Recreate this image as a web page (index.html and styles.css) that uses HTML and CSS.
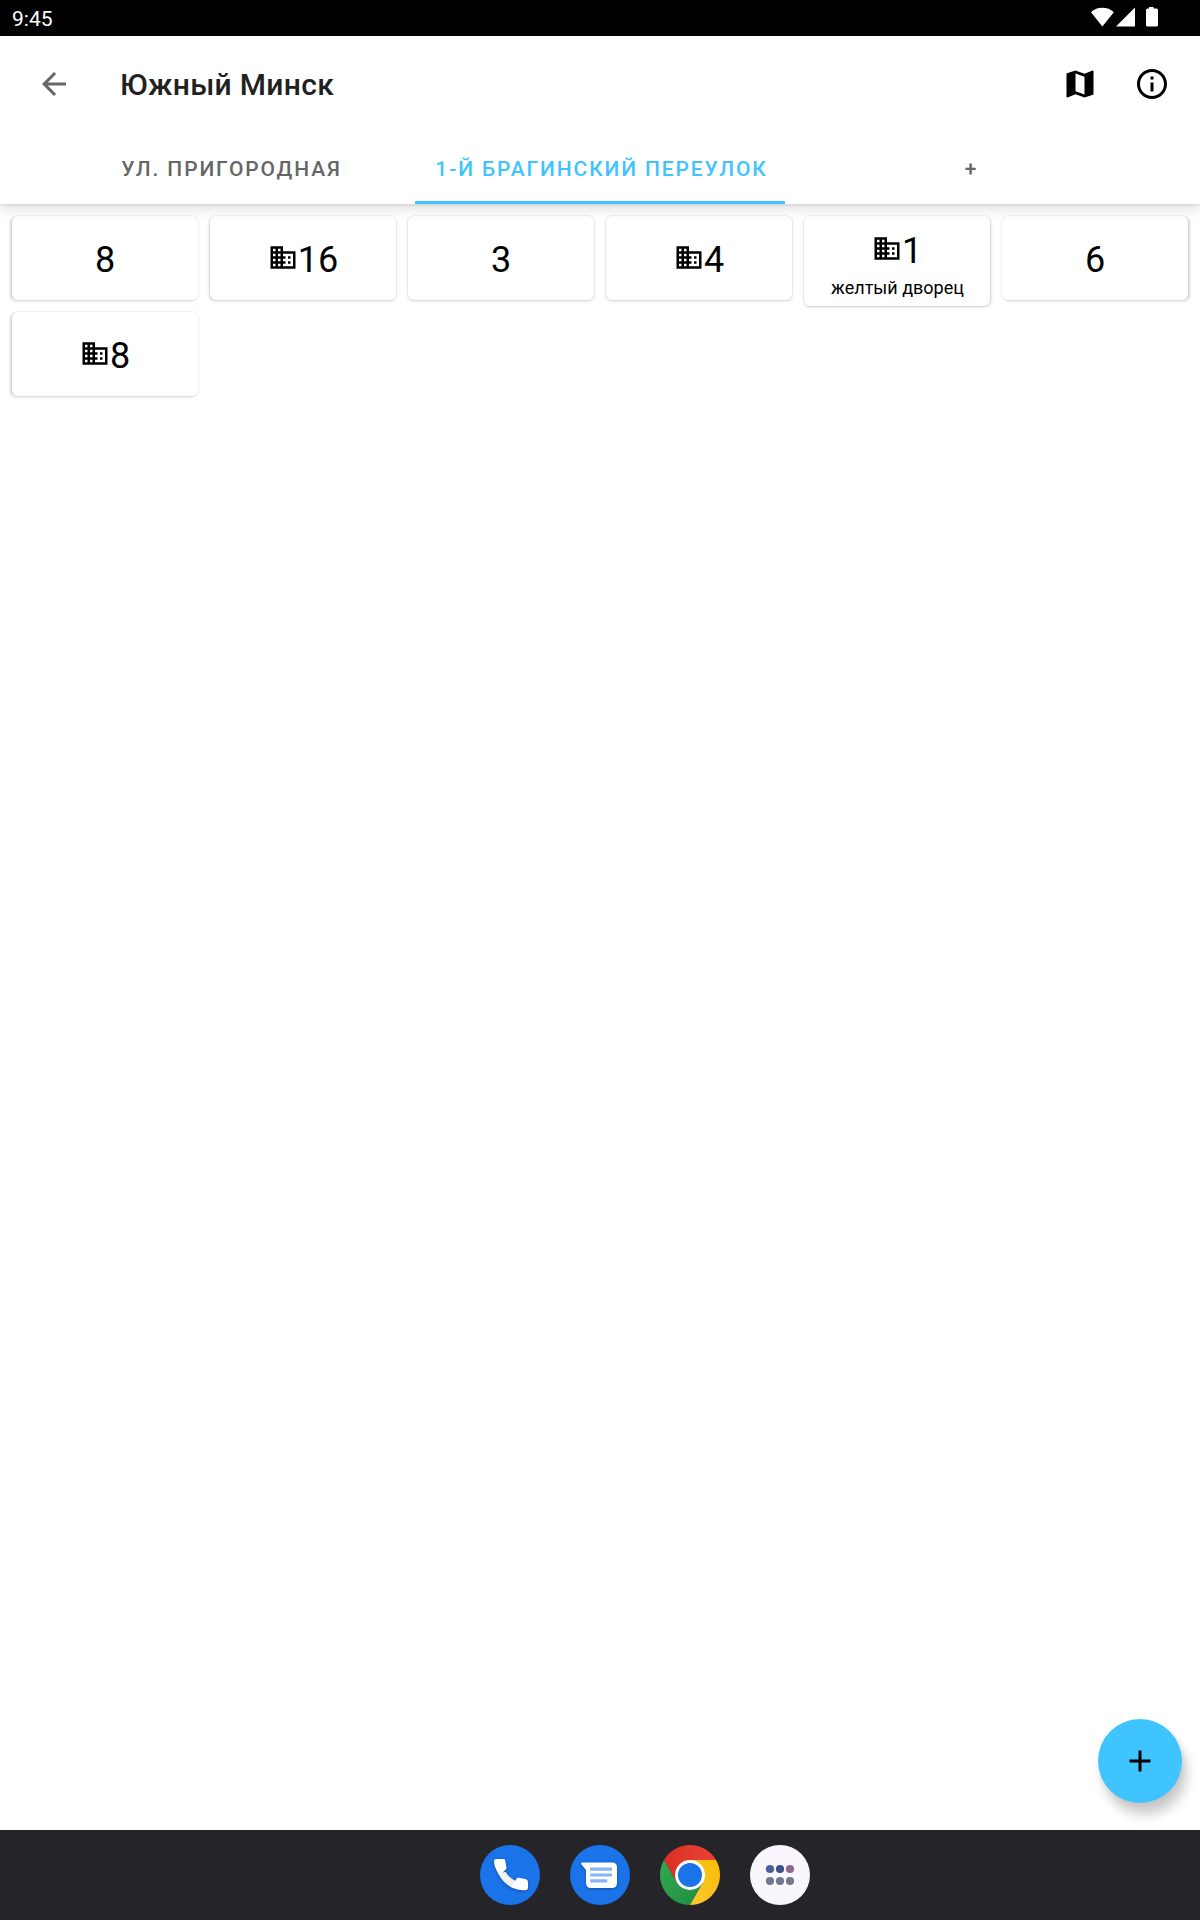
FILE: index.html
```
<!DOCTYPE html>
<html lang="ru">

<head>
    <meta charset="UTF-8">
    <title>Южный Минск</title>
    <link rel="stylesheet" href="styles.css">
</head>

<body>
    <svg class="sprite" aria-hidden="true">
        <symbol id="business" viewBox="0 0 24 24">
            <path d="M12 7V3H2v18h20V7H12zM6 19H4v-2h2v2zm0-4H4v-2h2v2zm0-4H4V9h2v2zm0-4H4V5h2v2zm4 12H8v-2h2v2zm0-4H8v-2h2v2zm0-4H8V9h2v2zm0-4H8V5h2v2zm10 12h-8v-2h2v-2h-2v-2h2v-2h-2V9h8v10zm-2-8h-2v2h2v-2zm0 4h-2v2h2v-2z"/>
        </symbol>
    </svg>

    <div class="status-bar">
        <span class="clock">9:45</span>
        <svg class="status-icons" width="68" height="20" viewBox="0 0 68 20">
            <path d="M0 5.200C3.200 2.300 7 .8 11.400.8S19.600 2.300 22.800 5.200L11.400 19.500z"/>
            <path d="M25 19.500L44 .5v19z"/>
            <path d="M58 0h4.500v1.500H65.500q1.500 0 1.500 1.500v15q0 1.500-1.500 1.500h-9q-1.500 0-1.500-1.500V3q0-1.500 1.500-1.500h1.500z"/>
        </svg>
    </div>

    <header class="app-bar">
        <div class="toolbar">
            <button class="icon-button back" aria-label="Назад">
                <svg viewBox="0 0 24 24"><path d="M20 11H7.83l5.59-5.59L12 4l-8 8 8 8 1.41-1.41L7.83 13H20v-2z"/></svg>
            </button>
            <h1>Южный Минск</h1>
            <button class="icon-button" aria-label="Карта">
                <svg viewBox="0 0 24 24"><path d="M20.5 3l-.16.03L15 5.1 9 3 3.36 4.9c-.21.07-.36.25-.36.48V20.5c0 .28.22.5.5.5l.16-.03L9 18.9l6 2.1 5.64-1.9c.21-.07.36-.25.36-.48V3.5c0-.28-.22-.5-.5-.5zM15 19l-6-2.11V5l6 2.11V19z"/></svg>
            </button>
            <button class="icon-button" aria-label="Информация">
                <svg viewBox="0 0 24 24"><path d="M11 7h2v2h-2zm0 4h2v6h-2zm1-9C6.48 2 2 6.48 2 12s4.480 10 10 10 10-4.480 10-10S17.520 2 12 2zm0 18c-4.410 0-8-3.590-8-8s3.590-8 8-8 8 3.590 8 8-3.590 8-8 8z"/></svg>
            </button>
        </div>
        <nav class="tabs">
            <a class="tab">УЛ. ПРИГОРОДНАЯ</a>
            <a class="tab active">1-Й БРАГИНСКИЙ ПЕРЕУЛОК</a>
            <a class="tab">+</a>
        </nav>
    </header>

    <main>
        <div class="houses">
            <div class="house"><div class="number">8</div></div>
            <div class="house"><div class="number"><svg><use href="#business"/></svg>16</div></div>
            <div class="house"><div class="number">3</div></div>
            <div class="house"><div class="number"><svg><use href="#business"/></svg>4</div></div>
            <div class="house with-note">
                <div class="number"><svg><use href="#business"/></svg>1</div>
                <div class="note">желтый дворец</div>
            </div>
            <div class="house"><div class="number">6</div></div>
            <div class="house"><div class="number"><svg><use href="#business"/></svg>8</div></div>
        </div>
        <button class="fab" aria-label="Добавить">
            <svg viewBox="0 0 24 24"><path d="M19 13h-6v6h-2v-6H5v-2h6V5h2v6h6v2z"/></svg>
        </button>
    </main>

    <footer class="taskbar">
        <!-- phone -->
        <svg class="app" viewBox="0 0 60 60">
            <circle cx="30" cy="30" r="30" fill="#1a73e8"/>
            <g class="lifted">
                <path d="M18.500 28.500C21 35 27.500 41 34 43.500L37 36.500C32 34.500 28 31.500 25.500 26.800z" fill="#eef0f6"/>
                <path d="M16.500 14h7q1.400 0 1.700 1.400l1.300 7.200q.2 1-.5 1.700l-6.500 6.300Q14.400 23 14 16.500q0-2.500 2.500-2.500z" fill="#fff"/>
                <path d="M38.300 32.800l6.300 1q3.400.5 3.400 3.700v4.800q0 2.900-3 2.900-7.500.2-13.300-3.200l5-8.600q.6-.8 1.600-.6z" fill="#fff"/>
            </g>
        </svg>
        <!-- messages -->
        <svg class="app" viewBox="0 0 60 60">
            <circle cx="30" cy="30" r="30" fill="#1a73e8"/>
            <path class="lifted" d="M12.300 17.500H42q5 0 5 5V38q0 5-5 5H21q-5 0-5-5V25l-4.700-5.800q-.7-1.500 1-1.700z" fill="#fff"/>
            <path d="M20.200 24.200h21.800M20.200 30h21.800M20.200 35.900h17" stroke="#8ab4f8" stroke-width="3.200"/>
        </svg>
        <!-- chrome -->
        <svg class="app" viewBox="0 0 60 60">
            <defs>
                <linearGradient id="red" x1="0" x2="1"><stop stop-color="#d93025"/><stop offset="1" stop-color="#ea4335"/></linearGradient>
                <linearGradient id="yellow" x1="1" y1="0" x2="0" y2="1"><stop stop-color="#fbbc04"/><stop offset="1" stop-color="#fcc934"/></linearGradient>
                <linearGradient id="green" x1="1" y1="1" x2="0" y2="0"><stop stop-color="#1e8e3e"/><stop offset="1" stop-color="#34a853"/></linearGradient>
            </defs>
            <path d="M17 37.500L4.020 15A30 30 0 0 0 30 60L43 37.500z" fill="url(#green)"/>
            <path d="M30 15L55.980 15A30 30 0 0 1 30 60L43 37.500z" fill="url(#yellow)"/>
            <path d="M17 37.500L4.020 15A30 30 0 0 1 55.980 15H30z" fill="url(#red)"/>
            <circle cx="30" cy="30" r="15" fill="#fff"/>
            <circle cx="30" cy="30" r="12" fill="#1a73e8"/>
        </svg>
        <!-- all apps -->
        <svg class="app" viewBox="0 0 60 60">
            <circle cx="30" cy="30" r="30" fill="#f9f7fd"/>
            <circle cx="20" cy="24" r="4.100" fill="#4b619b"/>
            <circle cx="30" cy="24" r="4.100" fill="#3f5189"/>
            <circle cx="40" cy="24" r="4.100" fill="#8e6a8b"/>
            <circle cx="20" cy="36" r="4.100" fill="#6f788c"/>
            <circle cx="30" cy="36" r="4.100" fill="#6f788c"/>
            <circle cx="40" cy="36" r="4.100" fill="#6f788c"/>
        </svg>
    </footer>
</body>

</html>
```
FILE: styles.css
```
:root {
    --accent: #40c4ff;
    --text: #212121;
    --text-secondary: #666;
    --taskbar: #252529;
    --gap: 12px;
}

* {
    margin: 0;
    padding: 0;
    box-sizing: border-box;
}

body {
    height: 100vh;
    display: flex;
    flex-direction: column;
    overflow: hidden;
    font-family: Roboto, sans-serif;
    background: #fff;
    color: #000;
}

button {
    border: none;
    background: none;
}

.sprite {
    position: absolute;
    width: 0;
    height: 0;
}

.status-bar {
    height: 36px;
    padding: 0 41px 0 12px;
    display: flex;
    align-items: center;
    justify-content: space-between;
    flex-shrink: 0;
    background: #000;
    color: #fff;
}

.clock {
    font-size: 21px;
    line-height: 24px;
    margin-top: 2px;
}

.status-icons {
    fill: #fff;
    margin-bottom: 2px;
}

.app-bar {
    position: relative;
    z-index: 1;
    flex-shrink: 0;
    background: #fff;
    box-shadow: 0 1px 3px rgba(0, 0, 0, 0.1), 0 5px 12px rgba(0, 0, 0, 0.12);
}

.toolbar {
    height: 96px;
    padding: 0 12px 0 18px;
    display: flex;
    align-items: center;
}

.toolbar h1 {
    flex: 1;
    margin-left: 30px;
    font-size: 30px;
    font-weight: 500;
    letter-spacing: 0.01em;
    color: var(--text);
}

.icon-button {
    width: 72px;
    height: 72px;
    padding: 18px;
}

.icon-button svg {
    display: block;
    width: 36px;
    height: 36px;
}

.icon-button.back {
    fill: var(--text-secondary);
}

.tabs {
    display: flex;
    justify-content: center;
    height: 72px;
}

.tab {
    width: 370px;
    padding: 5px 0 0 3px;
    border-bottom: 3px solid transparent;
    display: flex;
    align-items: center;
    justify-content: center;
    font-size: 21px;
    font-weight: 500;
    letter-spacing: 0.0893em;
    color: var(--text-secondary);
}

.tab.active {
    color: var(--accent);
    border-color: var(--accent);
}

main {
    flex: 1;
    position: relative;
}

.houses {
    display: grid;
    grid-template-columns: repeat(6, 186px);
    grid-auto-rows: 84px;
    gap: var(--gap);
    padding: var(--gap);
}

.house {
    --shift: 0px;
    height: 84px;
    display: flex;
    flex-direction: column;
    align-items: center;
    justify-content: center;
    background: #fff;
    border-radius: 6px;
    box-shadow: 0 0 1px 1px rgba(0, 0, 0, 0.04), var(--shift) 1px 3px rgba(0, 0, 0, 0.16);
}

/* light falls from the middle of the screen */
.house:nth-child(6n + 1) {
    --shift: -1.5px;
}

.house:nth-child(6n + 2) {
    --shift: -0.8px;
}

.house:nth-child(6n + 5) {
    --shift: 0.8px;
}

.house:nth-child(6n) {
    --shift: 1.5px;
}

.house.with-note {
    height: 90px;
    padding-top: 6px;
}

.number {
    display: flex;
    align-items: center;
    font-size: 36px;
    line-height: 42px;
    padding-top: 3px;
}

.number svg {
    width: 30px;
    height: 31px;
    margin-top: -5px;
}

.note {
    font-size: 18px;
    line-height: 21px;
    padding-left: 1px;
}

.with-note .number {
    padding-top: 0;
    margin-bottom: 5px;
}

.fab {
    position: absolute;
    right: 18px;
    bottom: 27px;
    width: 84px;
    height: 84px;
    padding: 24px;
    border-radius: 50%;
    background: var(--accent);
    box-shadow: 5px 12px 12px rgba(0, 0, 0, 0.2), 1px 2px 6px rgba(0, 0, 0, 0.06);
}

.fab svg {
    display: block;
    width: 36px;
    height: 36px;
}

.taskbar {
    height: 90px;
    padding-left: 90px;
    display: flex;
    align-items: center;
    justify-content: center;
    gap: 30px;
    flex-shrink: 0;
    background: var(--taskbar);
}

.app {
    width: 60px;
    height: 60px;
}

.lifted {
    filter: drop-shadow(0 1.5px 1.5px rgba(0, 0, 0, 0.3));
}
```
